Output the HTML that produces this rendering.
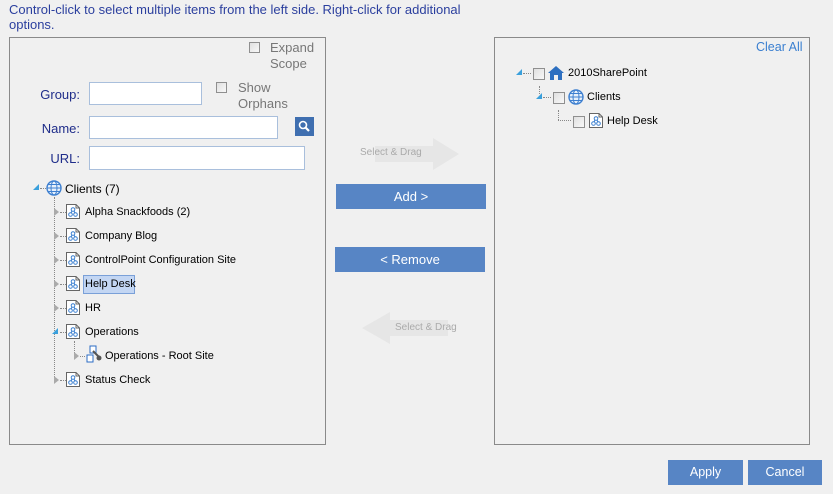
<!DOCTYPE html>
<html><head><style>
body{margin:0;width:833px;height:494px;background:#f0f0f0;font-family:"Liberation Sans",Tahoma,sans-serif;font-size:12px;position:relative;overflow:hidden;color:#000}
.a{position:absolute;white-space:nowrap}
.panel{position:absolute;border:1px solid #8a8a8a;background:#f0f0f0;box-sizing:border-box}
.inp{position:absolute;background:#fff;border:1px solid #a9bfdc;box-sizing:border-box;height:23px}
.lbl{position:absolute;color:#1f2d8a;font-size:13px;text-align:right}
.cb{position:absolute;width:11px;height:11px;border:1px solid #8f8f8f;background:linear-gradient(135deg,#e0e0e0,#f8f8f8);box-sizing:border-box}
.btn{position:absolute;background:#5785c5;color:#fff;font-size:13px;text-align:center;box-sizing:border-box}
.gray{color:#777;font-size:13px}
.dv{position:absolute;border-left:1px dotted #888}
.dh{position:absolute;border-top:1px dotted #888;height:0}
.tri{position:absolute;width:0;height:0;border-top:4px solid transparent;border-bottom:4px solid transparent;border-left:5px solid #aaa}
.ex{position:absolute;width:0;height:0;border-left:6px solid transparent;border-bottom:6px solid #3aa0dc}
.si{position:absolute}
.t{position:absolute;font-size:11px}
</style></head><body>
<svg width="0" height="0" style="position:absolute"><defs><g id="site"><path d="M0.5 0.5 H10 L13.5 4 V14.5 H0.5 Z" fill="#fff" stroke="#666"/><path d="M10 0.5 V4 H13.5" fill="none" stroke="#666"/><circle cx="7" cy="5.5" r="1.8" fill="none" stroke="#3a7fd0"/><circle cx="4.5" cy="10.5" r="1.8" fill="none" stroke="#3a7fd0"/><circle cx="9.5" cy="10.5" r="1.8" fill="none" stroke="#3a7fd0"/><path d="M6 7 L5 9 M8 7 L9 9" stroke="#3a7fd0"/></g></defs></svg>
<div class="a" style="left:9px;top:2px;color:#2b3f9e;font-size:13px;line-height:15px">Control-click to select multiple items from the left side. Right-click for additional<br>options.</div>

<div class="panel" style="left:9px;top:37px;width:317px;height:408px"></div>
<div class="cb" style="left:249px;top:42px"></div>
<div class="a gray" style="left:270px;top:40px;line-height:16px">Expand<br>Scope</div>
<div class="lbl" style="left:30px;top:87px;width:50px">Group:</div>
<div class="inp" style="left:89px;top:82px;width:113px"></div>
<div class="cb" style="left:216px;top:82px"></div>
<div class="a gray" style="left:238px;top:80px;line-height:16px">Show<br>Orphans</div>
<div class="lbl" style="left:30px;top:121px;width:50px">Name:</div>
<div class="inp" style="left:89px;top:116px;width:189px"></div>
<div class="a" style="left:295px;top:117px;width:19px;height:19px;background:#3f6fb0"><svg width="19" height="19"><circle cx="8" cy="8" r="3.5" fill="none" stroke="#fff" stroke-width="1.6"/><line x1="10.5" y1="10.5" x2="14" y2="14" stroke="#fff" stroke-width="2.2"/></svg></div>
<div class="lbl" style="left:30px;top:151px;width:50px">URL:</div>
<div class="inp" style="left:89px;top:146px;width:216px;height:24px"></div>

<div class="ex" style="left:33px;top:184px"></div>
<div class="dh" style="left:40px;top:188px;width:6px"></div>
<svg class="a" style="left:46px;top:180px" width="16" height="16"><circle cx="8" cy="8" r="7" fill="#e6f0fb" stroke="#3d7fd0" stroke-width="1.4"/><ellipse cx="8" cy="8" rx="3" ry="7" fill="none" stroke="#3d7fd0"/><line x1="1" y1="8" x2="15" y2="8" stroke="#3d7fd0"/><line x1="2.5" y1="4.5" x2="13.5" y2="4.5" stroke="#3d7fd0"/><line x1="2.5" y1="11.5" x2="13.5" y2="11.5" stroke="#3d7fd0"/></svg>
<div class="t" style="left:65px;top:182px;font-size:12px">Clients (7)</div>
<div class="dv" style="left:54px;top:197px;height:184px"></div>

<div class="tri" style="left:54px;top:208px"></div><div class="dh" style="left:60px;top:212px;width:6px"></div><svg class="si" style="left:66px;top:204px" width="15" height="16"><use href="#site"/></svg><div class="t" style="left:85px;top:206px">Alpha Snackfoods (2)</div>
<div class="tri" style="left:54px;top:232px"></div><div class="dh" style="left:60px;top:236px;width:6px"></div><svg class="si" style="left:66px;top:228px" width="15" height="16"><use href="#site"/></svg><div class="t" style="left:85px;top:230px">Company Blog</div>
<div class="tri" style="left:54px;top:256px"></div><div class="dh" style="left:60px;top:260px;width:6px"></div><svg class="si" style="left:66px;top:252px" width="15" height="16"><use href="#site"/></svg><div class="t" style="left:85px;top:254px">ControlPoint Configuration Site</div>
<div class="tri" style="left:54px;top:280px"></div><div class="dh" style="left:60px;top:284px;width:6px"></div><svg class="si" style="left:66px;top:276px" width="15" height="16"><use href="#site"/></svg><div class="a" style="left:83px;top:275px;width:52px;height:19px;background:#c3d6f3;border:1px solid #7aa0d8;box-sizing:border-box"></div><div class="t" style="left:85px;top:278px">Help Desk</div>
<div class="tri" style="left:54px;top:304px"></div><div class="dh" style="left:60px;top:308px;width:6px"></div><svg class="si" style="left:66px;top:300px" width="15" height="16"><use href="#site"/></svg><div class="t" style="left:85px;top:302px">HR</div>
<div class="ex" style="left:52px;top:328px"></div><div class="dh" style="left:60px;top:332px;width:6px"></div><svg class="si" style="left:66px;top:324px" width="15" height="16"><use href="#site"/></svg><div class="t" style="left:85px;top:326px">Operations</div>
<div class="dv" style="left:74px;top:341px;height:14px"></div>
<div class="tri" style="left:74px;top:352px"></div><div class="dh" style="left:80px;top:356px;width:5px"></div>
<svg class="a" style="left:86px;top:345px" width="17" height="18"><rect x="4" y="1" width="6" height="7" fill="#fff" stroke="#2b6cc4"/><rect x="1" y="10" width="6" height="7" fill="#fff" stroke="#2b6cc4"/><path d="M7 6 L13 12" stroke="#555" stroke-width="2"/><circle cx="13" cy="13" r="2.5" fill="#555"/></svg>
<div class="t" style="left:105px;top:350px">Operations - Root Site</div>
<div class="tri" style="left:54px;top:376px"></div><div class="dh" style="left:60px;top:380px;width:6px"></div><svg class="si" style="left:66px;top:372px" width="15" height="16"><use href="#site"/></svg><div class="t" style="left:85px;top:374px">Status Check</div>

<svg class="a" style="left:355px;top:136px" width="110" height="36"><path d="M20 10 H78 V2 L104 18 L78 34 V26 H20 Z" fill="#e6e6e6"/></svg>
<div class="a" style="left:360px;top:147px;color:#aaa;font-size:10px">Select &amp; Drag</div>
<div class="btn" style="left:336px;top:184px;width:150px;height:25px;line-height:25px">Add &gt;</div>
<div class="btn" style="left:335px;top:247px;width:150px;height:25px;line-height:25px">&lt; Remove</div>
<svg class="a" style="left:358px;top:310px" width="110" height="36"><path d="M90 10 H32 V2 L4 18 L32 34 V26 H90 Z" fill="#e6e6e6"/></svg>
<div class="a" style="left:395px;top:322px;color:#aaa;font-size:10px">Select &amp; Drag</div>

<div class="panel" style="left:494px;top:37px;width:316px;height:408px"></div>
<div class="a" style="left:756px;top:40px;color:#3a7fd0;font-size:12.5px">Clear All</div>
<div class="ex" style="left:516px;top:69px"></div><div class="dh" style="left:523px;top:73px;width:8px"></div>
<div class="cb" style="left:533px;top:68px;width:12px;height:12px"></div>
<svg class="a" style="left:547px;top:65px" width="18" height="16"><path d="M9 1 L17 8 H15 V15 H11 V10 H7 V15 H3 V8 H1 Z" fill="#2d6fc0"/></svg>
<div class="t" style="left:568px;top:67px">2010SharePoint</div>
<div class="dv" style="left:539px;top:86px;height:8px"></div>
<div class="ex" style="left:536px;top:93px"></div><div class="dh" style="left:543px;top:97px;width:8px"></div>
<div class="cb" style="left:553px;top:92px;width:12px;height:12px"></div>
<svg class="a" style="left:568px;top:89px" width="16" height="16"><circle cx="8" cy="8" r="7" fill="#e6f0fb" stroke="#3d7fd0" stroke-width="1.4"/><ellipse cx="8" cy="8" rx="3" ry="7" fill="none" stroke="#3d7fd0"/><line x1="1" y1="8" x2="15" y2="8" stroke="#3d7fd0"/><line x1="2.5" y1="4.5" x2="13.5" y2="4.5" stroke="#3d7fd0"/><line x1="2.5" y1="11.5" x2="13.5" y2="11.5" stroke="#3d7fd0"/></svg>
<div class="t" style="left:587px;top:91px">Clients</div>
<div class="dv" style="left:558px;top:110px;height:10px"></div><div class="dh" style="left:558px;top:120px;width:13px"></div>
<div class="cb" style="left:573px;top:116px;width:12px;height:12px"></div>
<svg class="si" style="left:589px;top:113px" width="15" height="16"><use href="#site"/></svg>
<div class="t" style="left:607px;top:115px">Help Desk</div>

<div class="btn" style="left:668px;top:460px;width:75px;height:25px;line-height:25px;font-size:12.5px">Apply</div>
<div class="btn" style="left:748px;top:460px;width:74px;height:25px;line-height:25px;font-size:12.5px">Cancel</div>
</body></html>
